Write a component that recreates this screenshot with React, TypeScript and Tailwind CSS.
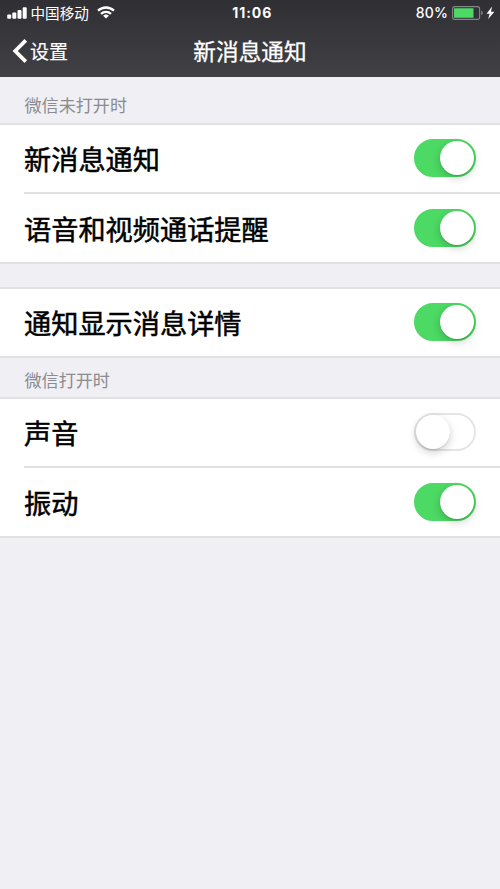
import clsx from 'clsx';
import { useState } from 'react';

interface SettingItem {
  id: string;
  label: string;
  enabled: boolean;
}

interface SettingGroup {
  id: string;
  title?: string;
  headerClass: string;
  items: SettingItem[];
}

const groups: SettingGroup[] = [
  {
    id: 'closed',
    title: '微信未打开时',
    headerClass: 'h-[46px] pt-[16px]',
    items: [
      { id: 'messages', label: '新消息通知', enabled: true },
      { id: 'calls', label: '语音和视频通话提醒', enabled: true },
    ],
  },
  {
    id: 'details',
    headerClass: 'h-[23px]',
    items: [{ id: 'preview', label: '通知显示消息详情', enabled: true }],
  },
  {
    id: 'open',
    title: '微信打开时',
    headerClass: 'h-[39px] pt-[10px]',
    items: [
      { id: 'sound', label: '声音', enabled: false },
      { id: 'vibrate', label: '振动', enabled: true },
    ],
  },
];

const StatusBar = () => (
  <div className="flex h-[25px] items-center pr-[5px] pl-[7px]">
    <div className="flex flex-1 items-center">
      <svg width="20" height="12" viewBox="0 0 20 12" fill="currentColor">
        <rect x="0.2" y="7.6" width="4" height="4.2" rx="1" />
        <rect x="5.3" y="5.4" width="4" height="6.4" rx="1" />
        <rect x="10.5" y="3" width="4" height="8.8" rx="1" />
        <rect x="15.7" y="0.2" width="4" height="11.6" rx="1" />
      </svg>
      <span className="ml-[3.5px] text-[14.6px] leading-5">中国移动</span>
      <svg className="ml-[8px]" width="18" height="13" viewBox="0 0 18 13" fill="none" stroke="currentColor" strokeWidth="2.3">
        <path d="M1 4.7a11.6 11.6 0 0 1 16 0" />
        <path d="M4 7.9a7.3 7.3 0 0 1 10 0" />
        <path d="M9 12.6 6.1 9.8a4.2 4.2 0 0 1 5.8 0Z" fill="currentColor" stroke="none" />
      </svg>
    </div>
    <span className="pl-[2.5px] font-['Inter','Liberation_Sans',sans-serif] text-[14px] font-bold tracking-[0.9px]">11:06</span>
    <div className="flex flex-1 items-center justify-end">
      <span className="font-['Inter','Liberation_Sans',sans-serif] text-[14px] font-medium tracking-[0.15px]">80%</span>
      <svg className="ml-[3.5px]" width="32" height="14" viewBox="0 0 32 14">
        <rect x="0.6" y="0.6" width="27" height="12.8" rx="2.2" fill="none" stroke="#85858a" strokeWidth="1.1" />
        <rect x="2" y="2.2" width="19.5" height="9.6" rx="0.6" fill="#4cd964" />
        <path d="M29.2 4.8v4.4c2.1-.6 2.1-3.8 0-4.4Z" fill="#85858a" />
      </svg>
      <svg className="ml-[2.5px]" width="9" height="14" viewBox="0 0 9 14" fill="currentColor">
        <path d="M6 .6.6 7.8h3L2.2 13 8.4 5.7H5Z" />
      </svg>
    </div>
  </div>
);

const NavBar = () => (
  <div className="grid h-[51px] grid-cols-[1fr_auto_1fr] items-center">
    <button className="flex items-center pl-[12px]">
      <svg width="16" height="24" viewBox="0 0 16 24" fill="none" stroke="currentColor" strokeWidth="3.7">
        <path d="M13.8 1.4 3.2 12l10.6 10.6" />
      </svg>
      <span className="ml-[2px] text-[19px] leading-6 [-webkit-text-stroke:0.2px_white]">设置</span>
    </button>
    <h1 className="text-[22.7px] leading-7 [-webkit-text-stroke:0.3px_white]">新消息通知</h1>
    <span />
  </div>
);

const Toggle = ({ checked, onChange }: { checked: boolean; onChange: () => void }) => (
  <button
    role="switch"
    aria-checked={checked}
    onClick={onChange}
    className={clsx(
      'flex h-[38px] w-[62px] items-center rounded-full border-2',
      checked ? 'justify-end border-[#4cd964] bg-[#4cd964]' : 'justify-start border-[#e5e5e5] bg-white',
    )}
  >
    <span className="size-[34px] rounded-full bg-white shadow-[0_3px_8px_rgba(0,0,0,0.2),0_1px_1px_rgba(0,0,0,0.1)]" />
  </button>
);

export default function App() {
  const [enabled, setEnabled] = useState<Record<string, boolean>>(() =>
    Object.fromEntries(groups.flatMap((group) => group.items.map((item) => [item.id, item.enabled]))),
  );

  const toggle = (id: string) => setEnabled((prev) => ({ ...prev, [id]: !prev[id] }));

  return (
    <div className="min-h-screen w-full bg-[#efeff4] font-['Noto_Sans_CJK_SC',sans-serif] text-black">
      <header className="h-[77px] bg-linear-to-b from-[#302f34] to-[#414045] text-white">
        <StatusBar />
        <NavBar />
      </header>

      {groups.map((group) => (
        <section key={group.id}>
          <div className={clsx('pl-[24.5px] text-[17.1px] leading-6 text-[#8b8b90]', group.headerClass)}>
            {group.title}
          </div>
          <div className="border-y-2 border-[#e1e1e4] bg-white">
            {group.items.map((item, index) => (
              <div
                key={item.id}
                className={clsx(
                  'ml-[24px] flex items-center justify-between pr-[24px]',
                  index > 0 ? 'h-[70px] border-t-2 border-[#e1e1e4]' : 'h-[67px] pb-[2px]',
                )}
              >
                <span className="text-[27.2px] leading-9 [-webkit-text-stroke:0.5px_black]">{item.label}</span>
                <Toggle checked={enabled[item.id]} onChange={() => toggle(item.id)} />
              </div>
            ))}
          </div>
        </section>
      ))}
    </div>
  );
}
